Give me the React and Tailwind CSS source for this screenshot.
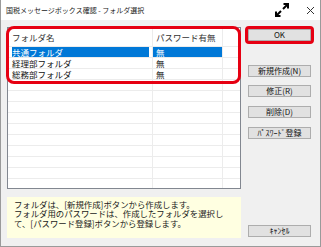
import React from 'react'

const FOLDERS = [
  { name: '共通フォルダ', pw: '無', selected: true },
  { name: '経理部フォルダ', pw: '無' },
  { name: '総務部フォルダ', pw: '無' },
]

const EMPTY_ROWS = 10

function Button({ label, className = '' }) {
  return (
    <button className={`h-[12px] w-full flex items-center justify-center bg-[#e1e1e1] border border-[#adadad] text-[8px] leading-none text-[#111] ${className}`}>
      {label}
    </button>
  )
}

function Row({ name, pw, selected }) {
  return (
    <div className="flex h-[11px] border-b border-[#ececec]">
      <div className="w-[145px] h-full border-r border-[#ececec] pl-[4px] pr-[3px]">
        <div className={`h-full flex items-center whitespace-nowrap ${selected ? 'bg-[#0078d7] text-white' : 'text-[#111]'}`}>
          {name}
        </div>
      </div>
      <div className="w-[70px] h-full border-r border-[#ececec]">
        <div className={`h-full flex items-center pl-[3px] ${selected ? 'bg-[#0078d7] text-white' : 'text-[#111]'}`}>
          {pw}
        </div>
      </div>
      <div className="flex-1" />
    </div>
  )
}

export default function App() {
  return (
    <div className="relative w-[321px] h-[247px] flex flex-col bg-[#f0f0f0] border-x border-b border-[#9a9a9a] font-['Noto_Sans_CJK_JP',sans-serif] overflow-hidden">
      {/* Title bar */}
      <div className="h-[20px] bg-white flex items-center flex-shrink-0">
        <span className="pl-[5px] text-[7px] text-[#222] whitespace-nowrap">国税メッセージボックス確認 - フォルダ選択</span>
        <div className="ml-auto flex items-center">
          <svg width="16" height="16" viewBox="0 0 16 16" className="mr-[16px] mt-[-1px]">
            <g fill="none" stroke="#000" strokeWidth="2">
              <path d="M9 7 L14 2" />
              <path d="M9.5 2 H14 V6.5" />
              <path d="M7 9 L2 14" />
              <path d="M2 9.5 V14 H6.5" />
            </g>
          </svg>
          <svg width="9" height="9" viewBox="0 0 9 9" className="mr-[5px]">
            <path d="M1 1 L8 8 M8 1 L1 8" stroke="#333" strokeWidth="1" />
          </svg>
        </div>
      </div>

      {/* Body */}
      <div className="flex-1 flex pt-[7px] pl-[6px]">
        <div className="w-[234px] flex flex-col">
          <div className="h-[162px] bg-white border border-[#828790] overflow-hidden text-[8.5px] leading-none">
            <div className="flex h-[19px] border-b border-[#ececec] text-[#333]">
              <div className="w-[145px] h-full border-r border-[#ececec] pl-[4px] flex items-center">フォルダ名</div>
              <div className="w-[70px] h-full border-r border-[#ececec] pl-[3px] flex items-center whitespace-nowrap">パスワード有無</div>
              <div className="flex-1" />
            </div>
            {FOLDERS.map(f => (
              <Row key={f.name} {...f} />
            ))}
            {Array.from({ length: EMPTY_ROWS }, (_, i) => (
              <Row key={i} name="" pw="" />
            ))}
          </div>

          <div className="mt-[8px] h-[41px] bg-[#ffffe1] pl-[7px] pt-[3px] text-[8.4px] leading-[9.4px] text-[#1a1a1a] whitespace-nowrap">
            <p>フォルダは、[新規作成]ボタンから作成します。</p>
            <p>フォルダ用のパスワードは、作成したフォルダを選択し</p>
            <p>て、[パスワード登録]ボタンから登録します。</p>
          </div>
        </div>

        <div className="ml-[7px] w-[63px] flex flex-col">
          <Button label="OK" className="mt-[2px]" />
          <Button label="新規作成(N)" className="mt-[24px]" />
          <Button label="修正(R)" className="mt-[8px]" />
          <Button label="削除(D)" className="mt-[9px]" />
          <Button label="ﾊﾟｽﾜｰﾄﾞ登録" className="mt-[9px]" />
          <Button label="ｷｬﾝｾﾙ" className="mt-[86px]" />
        </div>
      </div>

      {/* Red annotation frames */}
      <div className="absolute left-[5px] top-[26px] w-[235px] h-[58px] border-[3px] border-[#e60012] rounded-[8px]" />
      <div className="absolute left-[244px] top-[26px] w-[69px] h-[18px] border-[3px] border-[#e60012] rounded-[4px]" />
    </div>
  )
}
